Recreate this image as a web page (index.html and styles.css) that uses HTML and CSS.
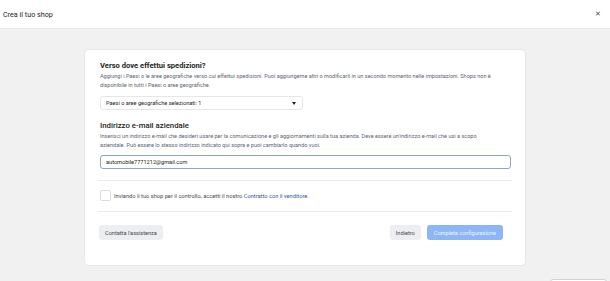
FILE: index.html
```html
<!DOCTYPE html>
<html lang="it">
<head>
<meta charset="utf-8">
<title>Crea il tuo shop</title>
<link rel="stylesheet" href="styles.css">
</head>
<body>
<header class="topbar">
  <span class="topbar-title">Crea il tuo shop</span>
  <span class="close">✕</span>
</header>
<main class="stage">
  <section class="card">
    <h2 class="heading">Verso dove effettui spedizioni?</h2>
    <p class="desc">Aggiungi i Paesi o le aree geografiche verso cui effettui spedizioni. Puoi aggiungerne altri o modificarli in un secondo momento nelle impostazioni. Shops non è disponibile in tutti i Paesi o aree geografiche.</p>
    <div class="select">
      <span>Paesi o aree geografiche selezionati: 1</span>
      <span class="caret"></span>
    </div>
    <h2 class="heading heading-2">Indirizzo e-mail aziendale</h2>
    <p class="desc">Inserisci un indirizzo e-mail che desideri usare per la comunicazione e gli aggiornamenti sulla tua azienda. Deve essere un'indirizzo e-mail che usi a scopo aziendale. Può essere lo stesso indirizzo indicato qui sopra e puoi cambiarlo quando vuoi.</p>
    <div class="input">automobile7771212@gmail.com</div>
    <hr class="divider divider-1">
    <div class="agree">
      <span class="checkbox"></span>
      <span>Inviando il tuo shop per il controllo, accetti il nostro <a class="link">Contratto con il venditore</a>.</span>
    </div>
    <hr class="divider divider-2">
    <div class="actions">
      <button class="btn">Contatta l'assistenza</button>
      <div class="actions-right">
        <button class="btn">Indietro</button>
        <button class="btn btn-primary">Completa configurazione</button>
      </div>
    </div>
  </section>
  <div class="floating"></div>
</main>
</body>
</html>
```
FILE: styles.css
```css
* { box-sizing: border-box; }
html, body { margin: 0; padding: 0; }
body {
  width: 610px;
  height: 281px;
  overflow: hidden;
  background: #f1f1f1;
  font-family: Roboto, "Liberation Sans", Arial, sans-serif;
  color: #1c1e21;
  position: relative;
}
.topbar {
  height: 29px;
  background: #fff;
  border-bottom: 1px solid #e8e8e8;
  display: flex;
  align-items: center;
  justify-content: space-between;
  padding: 0 9px 0 3px;
}
.topbar-title {
  font-size: 7.2px;
  font-weight: 400;
  color: #1c1e21;
}
.close {
  font-size: 6.5px;
  color: #4b4f56;
}
.stage {
  padding: 21px 0 0 85px;
}
.card {
  width: 440px;
  height: 215px;
  background: #fff;
  border-radius: 4px;
  box-shadow: 0 0 2px rgba(0,0,0,0.12);
  padding: 11px 15px 0 15px;
}
.heading {
  margin: 0;
  font-size: 7.6px;
  line-height: 10px;
  font-weight: 700;
  color: #1c1e21;
}
.heading-2 {
  margin-top: 11px;
  font-weight: 500;
  font-size: 7.8px;
}
.desc {
  margin: 1px 0 0;
  font-size: 5.56px;
  line-height: 8.5px;
  color: #606770;
  padding-right: 8px;
}
.select {
  margin-top: 7px;
  width: 203px;
  height: 14px;
  border: 1px solid #e4e6e9;
  border-radius: 3px;
  display: flex;
  align-items: center;
  justify-content: space-between;
  padding: 0 6px 0 5px;
  font-size: 5.6px;
  color: #1c1e21;
}
.caret {
  width: 0;
  height: 0;
  border-left: 2.5px solid transparent;
  border-right: 2.5px solid transparent;
  border-top: 3px solid #1c1e21;
}
.input {
  margin-top: 6px;
  width: 411px;
  height: 14px;
  border: 1px solid #8fa6c4;
  border-radius: 3px;
  display: flex;
  align-items: center;
  padding: 0 5px;
  font-size: 5.6px;
  color: #1c1e21;
}
.divider {
  border: 0;
  border-top: 1px solid #e9ebee;
  margin: 0 0 0 -2px;
  width: 414px;
}
.divider-1 { margin-top: 11px; }
.divider-2 { margin-top: 10px; }
.agree {
  margin-top: 9px;
  height: 11px;
  display: flex;
  align-items: center;
  gap: 3px;
  font-size: 5.7px;
  color: #444950;
}
.checkbox {
  width: 11px;
  height: 11px;
  border: 1px solid #dadde1;
  border-radius: 2px;
  background: #fff;
}
.link { color: #385898; }
.actions {
  margin-top: 13px;
  display: flex;
  justify-content: space-between;
  align-items: center;
  margin-left: -1px;
  margin-right: 7px;
}
.actions-right {
  display: flex;
  gap: 6px;
}
.btn {
  height: 15px;
  border: 0;
  border-radius: 3px;
  background: #eceef1;
  color: #444950;
  font-family: inherit;
  font-size: 5.6px;
  padding: 0 6px;
  margin: 0;
}
.btn-primary {
  background: #8eb6f3;
  color: #eef4fd;
  padding: 0 7px;
}
.floating {
  position: absolute;
  right: 3px;
  bottom: -10px;
  width: 57px;
  height: 12px;
  border: 1px solid #d0d3d8;
  border-radius: 3px;
  background: #fff;
}
```
